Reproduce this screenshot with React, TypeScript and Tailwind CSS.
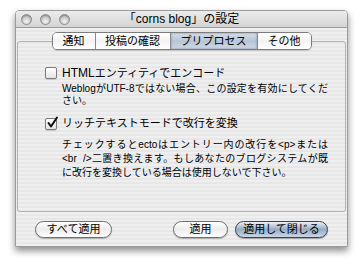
import React from 'react';

const TABS = [
  { label: '通知', w: 'w-[42px]', active: false },
  { label: '投稿の確認', w: 'w-[75px]', active: false },
  { label: 'プリプロセス', w: 'w-[87px]', active: true },
  { label: 'その他', w: 'w-[54px]', active: false },
];

const stripes =
  'bg-[repeating-linear-gradient(to_bottom,#efefef_0px,#efefef_2px,#e7e7e7_2px,#e7e7e7_4px)]';

const Light = () => (
  <div className="w-[11px] h-[11px] rounded-full border border-[#8c8c8c] bg-[radial-gradient(circle_at_50%_70%,#f4f4f4,#c4c4c4_60%,#a9a9a9)] shadow-[inset_0_1px_1px_rgba(0,0,0,0.25)]" />
);

const CheckBox = ({ checked }: { checked: boolean }) => (
  <div className="relative w-[12px] h-[12px] shrink-0 rounded-[2px] border border-[#7b7b7b] bg-gradient-to-b from-[#ffffff] to-[#e4e4e4] shadow-[0_1px_1px_rgba(0,0,0,0.15)]">
    {checked && (
      <svg className="absolute left-[0px] top-[-3px]" width="13" height="13" viewBox="0 0 13 13">
        <path d="M2.5 7 L5 10.5 L11 1.5" fill="none" stroke="#111" strokeWidth="2" strokeLinecap="round" strokeLinejoin="round" />
      </svg>
    )}
  </div>
);

const Pill = ({ label, w, primary }: { label: string; w: string; primary?: boolean }) => (
  <button
    className={
      primary
        ? `${w} h-[17px] rounded-full border border-[#34425a] bg-gradient-to-b from-[#eef2f7] via-[#96abc4] to-[#c9d7e7] text-[11px] leading-[15px] text-black shadow-[0_1px_1px_rgba(0,0,0,0.3)]`
        : `${w} h-[17px] rounded-full border border-[#6e6e6e] bg-gradient-to-b from-[#ffffff] via-[#ececec] to-[#ffffff] text-[11px] leading-[15px] text-black shadow-[0_1px_1px_rgba(0,0,0,0.25)]`
    }
  >
    {label}
  </button>
);

// full lines of the help text are justified to the column width, the last one is not
const Line = ({ children, full }: { children: React.ReactNode; full?: boolean }) => (
  <div className={full ? 'text-justify [text-align-last:justify]' : ''}>{children}</div>
);

export default function App() {
  return (
    <div className="w-[363px] h-[265px] bg-white pt-[10px] pl-[15px] font-['Liberation_Sans','Noto_Sans_CJK_JP',sans-serif] text-black">
      <div className="w-[333px] h-[237px] flex flex-col rounded-t-[4px] border border-[#9c9c9c] shadow-[0_4px_7px_rgba(0,0,0,0.45)] overflow-hidden">
        {/* title bar */}
        <div className="relative h-[17px] shrink-0 flex items-center border-b border-[#9a9a9a] bg-gradient-to-b from-[#ececec] to-[#d4d4d4]">
          <div className="flex items-center gap-[8px] pl-[5px]">
            <Light />
            <Light />
            <Light />
          </div>
          <div className="absolute inset-0 flex items-center justify-center text-[12px] leading-[16px]">
            「corns blog」の設定
          </div>
        </div>

        {/* body */}
        <div className={`flex-1 flex flex-col ${stripes}`}>
          <div className="relative z-10 flex justify-center mt-[4px]">
            <div className="flex h-[18px] rounded-[5px] border border-[#7c7c7c] overflow-hidden shadow-[0_1px_1px_rgba(0,0,0,0.15)]">
              {TABS.map((t, i) => (
                <div
                  key={t.label}
                  className={`${t.w} flex items-center justify-center text-[11px] leading-[16px] ${
                    i > 0 ? 'border-l border-[#8a8a8a]' : ''
                  } ${
                    t.active
                      ? 'bg-gradient-to-b from-[#d6dfea] via-[#b7c5d6] to-[#cfd9e5] shadow-[inset_0_0_2px_rgba(40,60,90,0.6)]'
                      : 'bg-gradient-to-b from-[#ffffff] via-[#f3f3f3] to-[#ffffff]'
                  }`}
                >
                  {t.label}
                </div>
              ))}
            </div>
          </div>

          <div className="mx-[1px] -mt-[9px] h-[171px] rounded-[3px] border border-[#b2b2b2] pt-[24px] pl-[27px]">
            <div className="flex items-start gap-[5px]">
              <div className="pt-[1px]">
                <CheckBox checked={false} />
              </div>
              <div>
                <div className="text-[11px] leading-[14px]">
                  <span className="text-[12px]">HTML</span>エンティティでエンコード
                </div>
                <div className="mt-[3px] w-[266px] text-[10px] leading-[12px] whitespace-nowrap">
                  <Line full>WeblogがUTF-8ではない場合、この設定を有効にしてくだ</Line>
                  <Line>さい。</Line>
                </div>
              </div>
            </div>

            <div className="flex items-start gap-[5px] mt-[9px]">
              <div className="pt-[2px]">
                <CheckBox checked={true} />
              </div>
              <div>
                <div className="text-[11px] leading-[15px]">リッチテキストモードで改行を変換</div>
                <div className="mt-[7px] w-[266px] text-[10px] leading-[14px] whitespace-nowrap">
                  <Line full>チェックするとectoはエントリー内の改行を&lt;p&gt;または</Line>
                  <Line full>&lt;br&nbsp;&nbsp;/&gt;二置き換えます。もしあなたのブログシステムが既</Line>
                  <Line>に改行を変換している場合は使用しないで下さい。</Line>
                </div>
              </div>
            </div>
          </div>

          <div className="flex items-center justify-between px-[19px] mt-[9px]">
            <Pill label="すべて適用" w="w-[77px]" />
            <div className="flex gap-[7px]">
              <Pill label="適用" w="w-[55px]" />
              <Pill label="適用して閉じる" w="w-[93px]" primary />
            </div>
          </div>
        </div>
      </div>
    </div>
  );
}
